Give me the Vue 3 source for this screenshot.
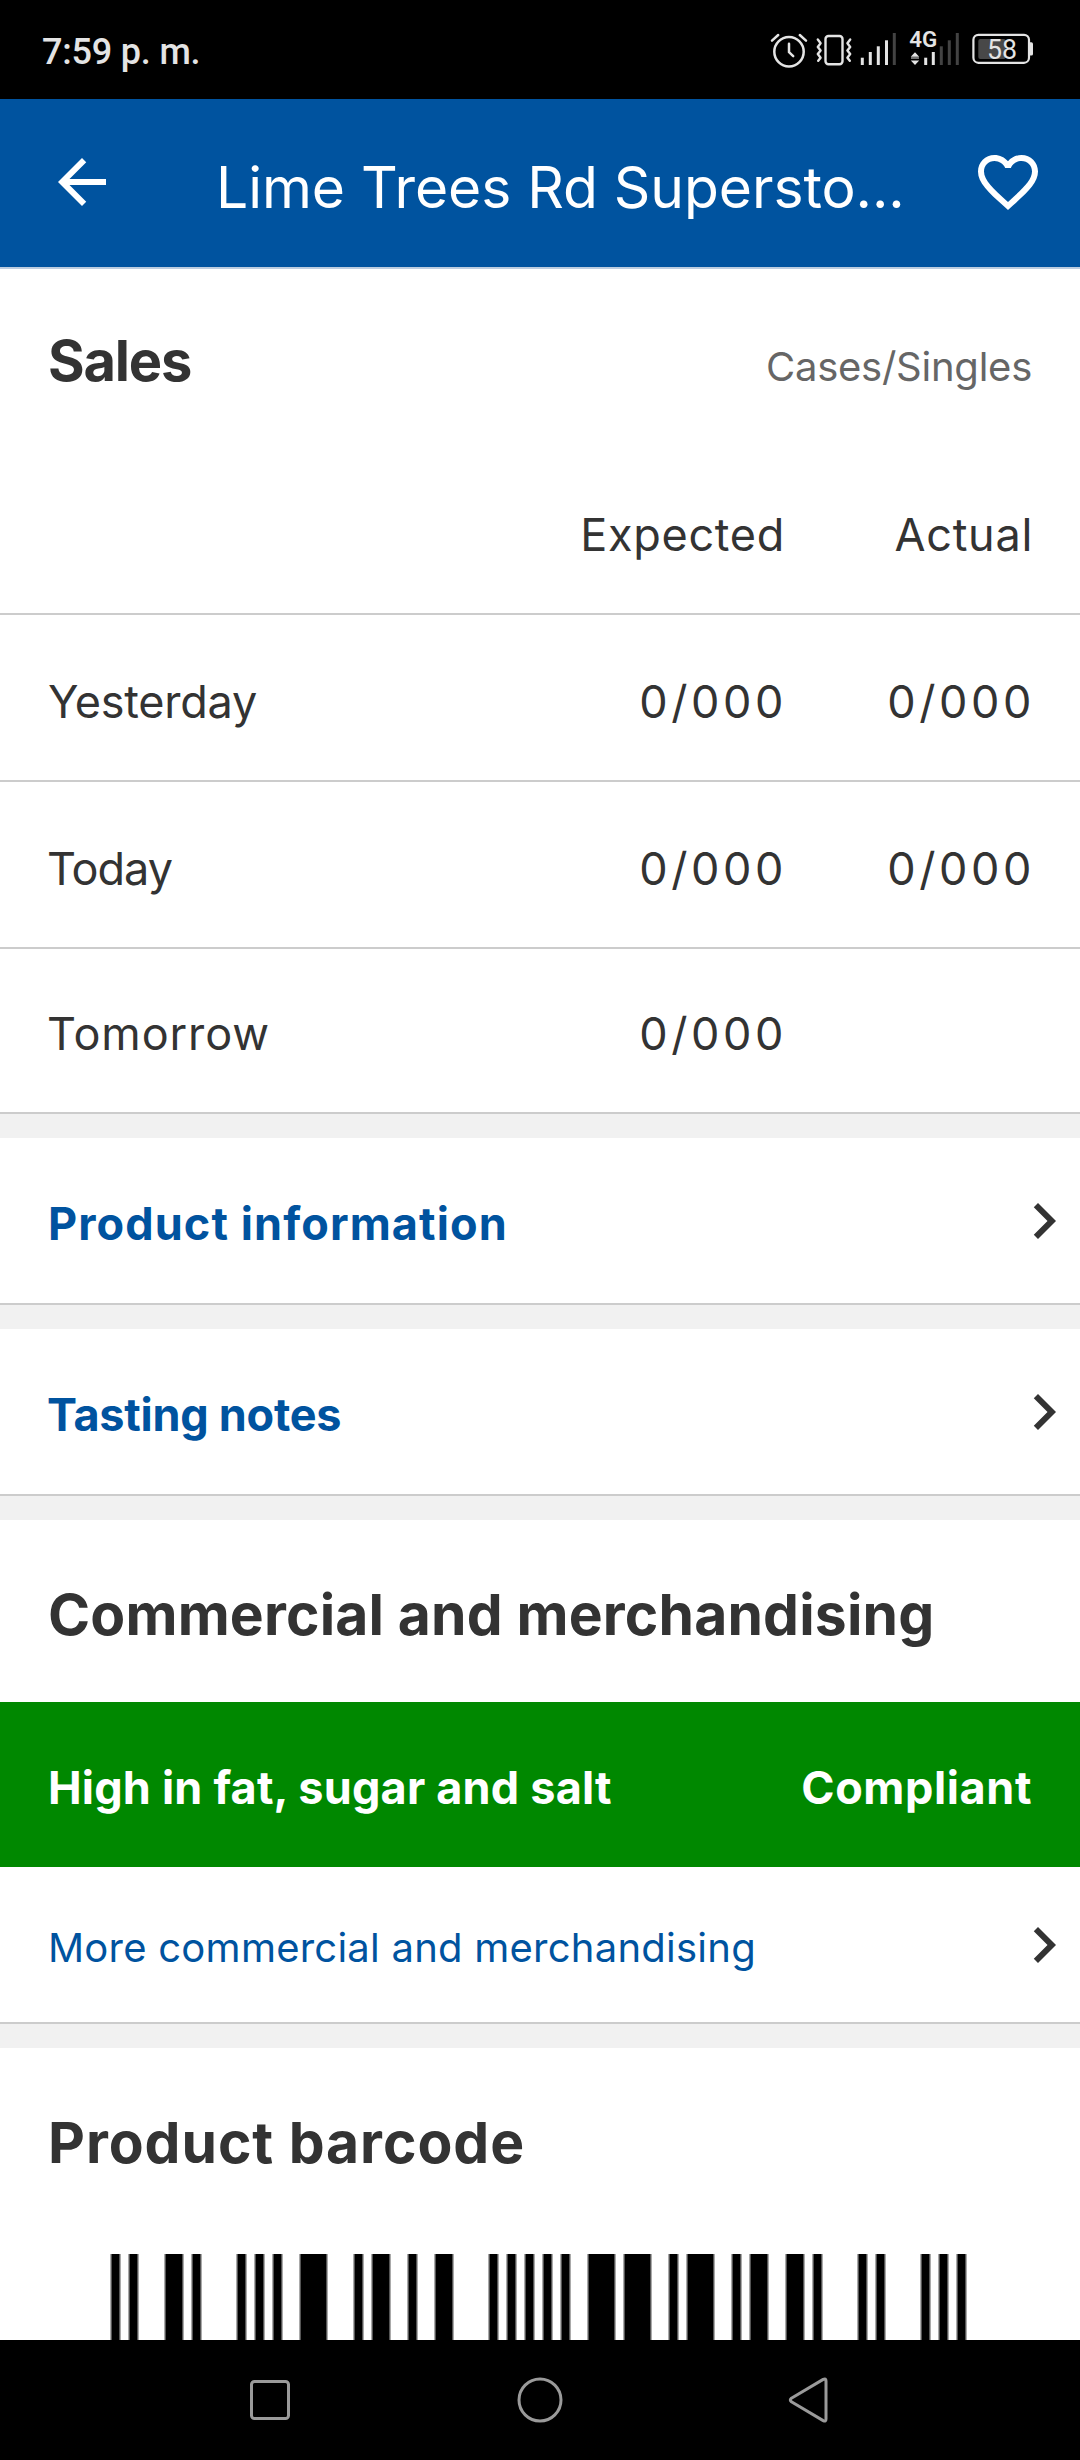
<script setup>
import { computed } from 'vue';

const sales = [
  { label: 'Yesterday', expected: '0/000', actual: '0/000' },
  { label: 'Today', expected: '0/000', actual: '0/000' },
  { label: 'Tomorrow', expected: '0/000', actual: '' }
];

const MODULE = 9;

// [start module, width in modules]
const bars = [
  [0, 1], [2, 1], [6, 2], [9, 1], [14, 1], [16, 1], [18, 1], [21, 3],
  [27, 1], [29, 2], [33, 1], [36, 2], [42, 1], [44, 1], [46, 1], [48, 1],
  [50, 1], [53, 3], [57, 3], [62, 1], [64, 3], [69, 1], [71, 2], [75, 2],
  [78, 1], [83, 1], [85, 1], [90, 1], [92, 1], [94, 1]
];

const barRects = computed(() => bars.map(([start, width]) => ({
  x: start * MODULE + 1,
  width: width * MODULE
})));

// Signal bars: x centre, top, dimmed
const signalOne = [[122.3, 57.7, false], [130.3, 52, false], [138.3, 46.3, false], [146.5, 40.3, false], [154.3, 33, true]];
const signalTwo = [[185.7, 57.7, false], [193.3, 52, false], [201.3, 46.3, true], [209.3, 40.3, true], [217.3, 33, true]];
</script>

<template>
  <div class="screen">
    <div class="status-bar">
      <span class="clock">7:59 p. m.</span>
      <svg class="status-icons" width="340" height="99" viewBox="0 0 340 99">
        <!-- Alarm -->
        <g fill="none" stroke="#e4e4e4" stroke-width="2.5" stroke-linecap="round" stroke-linejoin="round">
          <circle cx="49" cy="51.8" r="14.7" />
          <path d="M32 40.6l6.2-5.6M66 40.6l-6.2-5.6M49 43.8v8.4l4.2 4" />
        </g>
        <!-- Vibrate -->
        <g fill="none" stroke="#e4e4e4" stroke-width="2.4" stroke-linejoin="round" stroke-linecap="round">
          <rect x="85.5" y="36" width="17" height="28.2" rx="3" />
          <path d="M77.8 39.5l2.8 3.8-2.8 3.6 2.8 3.6-2.8 3.6 2.8 3.6-2.4 3" />
          <path d="M110.2 39.5l-2.8 3.8 2.8 3.6-2.8 3.6 2.8 3.6-2.8 3.6 2.4 3" />
        </g>
        <!-- Signal -->
        <g stroke-width="3" stroke-linecap="butt">
          <path
            v-for="[x, top, dim] in [...signalOne, ...signalTwo]"
            :key="x"
            :d="`M${x} ${top}V65`"
            :stroke="dim ? '#434343' : '#e4e4e4'"
          />
        </g>
        <text class="network" x="169.3" y="47.4" textLength="28" lengthAdjust="spacingAndGlyphs">4G</text>
        <path d="M175 52.2l4.2 4.6h-8.4zM175 65l4.2-4.6h-8.4zM171 57.5h8v1h-8z" fill="#e4e4e4" />
        <!-- Battery -->
        <rect x="238.3" y="39" width="27.4" height="20" rx="2" fill="#484848" />
        <rect x="233.4" y="34.8" width="55.6" height="28" rx="5" fill="none" stroke="#e4e4e4" stroke-width="2.2" />
        <path d="M290 42.3h1.4a1.6 1.6 0 0 1 1.6 1.6v10a1.6 1.6 0 0 1-1.6 1.6H290z" fill="#e4e4e4" />
        <text class="battery-level" x="247" y="59.3" textLength="30" lengthAdjust="spacingAndGlyphs">58</text>
      </svg>
    </div>

    <header class="app-bar">
      <svg class="bar-icon" viewBox="0 0 24 24" fill="#fff">
        <path d="M20 11H7.83l5.59-5.59L12 4l-8 8 8 8 1.41-1.41L7.83 13H20v-2z" />
      </svg>
      <h1 class="bar-title">Lime Trees Rd Supersto...</h1>
      <svg class="bar-icon" viewBox="0 0 24 24" fill="#fff">
        <path d="M16.5 3c-1.74 0-3.41.81-4.5 2.09C10.91 3.81 9.24 3 7.5 3 4.42 3 2 5.42 2 8.5c0 3.78 3.4 6.86 8.55 11.54L12 21.35l1.45-1.32C18.6 15.36 22 12.28 22 8.5 22 5.42 19.58 3 16.5 3zm-4.4 15.55l-.1.1-.1-.1C7.14 14.24 4 11.39 4 8.5 4 6.5 5.5 5 7.5 5c1.54 0 3.04.99 3.57 2.36h1.87C13.46 5.99 14.96 5 16.5 5c2 0 3.5 1.5 3.5 3.5 0 2.89-3.14 5.74-7.9 10.05z" />
      </svg>
    </header>

    <main class="content">
      <section class="card">
        <div class="sales-head">
          <h2 class="heading sales-title">Sales</h2>
          <span class="unit">Cases/Singles</span>
        </div>
        <div class="sales-row sales-columns">
          <span></span>
          <span>Expected</span>
          <span>Actual</span>
        </div>
        <div v-for="row in sales" :key="row.label" class="sales-row">
          <span :class="row.label.toLowerCase()">{{ row.label }}</span>
          <span class="number">{{ row.expected }}</span>
          <span class="number">{{ row.actual }}</span>
        </div>
      </section>

      <section class="card link-row">
        <span class="link-label product-link">Product information</span>
        <svg class="chevron" viewBox="0 0 24 24"><path d="M10 6L8.59 7.41 13.17 12l-4.58 4.59L10 18l6-6z" /></svg>
      </section>

      <section class="card link-row">
        <span class="link-label tasting-link">Tasting notes</span>
        <svg class="chevron" viewBox="0 0 24 24"><path d="M10 6L8.59 7.41 13.17 12l-4.58 4.59L10 18l6-6z" /></svg>
      </section>

      <section class="card">
        <h2 class="heading commercial-title">Commercial and merchandising</h2>
        <div class="compliance">
          <span class="hfss">High in fat, sugar and salt</span>
          <span class="compliant">Compliant</span>
        </div>
        <div class="link-row more-row">
          <span class="more-label">More commercial and merchandising</span>
          <svg class="chevron" viewBox="0 0 24 24"><path d="M10 6L8.59 7.41 13.17 12l-4.58 4.59L10 18l6-6z" /></svg>
        </div>
      </section>

      <section class="card barcode-card">
        <h2 class="heading barcode-title">Product barcode</h2>
        <svg class="barcode" width="857" height="86" viewBox="0 0 857 86" shape-rendering="crispEdges">
          <g v-for="bar in barRects" :key="bar.x">
            <rect :x="bar.x - 1" y="0" :width="bar.width + 2" height="86" fill="#aaa" />
            <rect :x="bar.x" y="0" :width="bar.width" height="86" fill="#555" />
            <rect :x="bar.x + 1" y="0" :width="bar.width - 2" height="86" fill="#000" />
          </g>
        </svg>
      </section>
    </main>

    <nav class="nav-bar">
      <svg class="nav-icon" viewBox="0 0 60 60"><rect x="11.5" y="11.5" width="37" height="37" rx="3" /></svg>
      <svg class="nav-icon" viewBox="0 0 60 60"><circle cx="30" cy="30" r="21" /></svg>
      <svg class="nav-icon" viewBox="0 0 60 60"><path d="M11.4 28.2L43.2 9.4Q46 8 46 11V49Q46 52 43.2 50.6L11.4 31.8Q9.2 30 11.4 28.2z" /></svg>
    </nav>
  </div>
</template>

<style>
body {
  margin: 0;
  background: #000;
}
</style>

<style scoped>
.screen {
  display: flex;
  flex-direction: column;
  width: 1080px;
  height: 2460px;
  overflow: hidden;
  background: #000;
  color: #333;
  font-family: Inter, sans-serif;
  font-size: 45px;
  line-height: 60px;
  white-space: nowrap;
}

.status-bar {
  display: flex;
  justify-content: space-between;
  height: 99px;
  padding-left: 42px;
  color: #e4e4e4;
  font-family: Roboto, sans-serif;
}

.clock {
  padding-top: 22px;
  font-size: 36px;
  font-weight: 500;
  letter-spacing: -0.2px;
}

.network {
  fill: #e4e4e4;
  font-size: 21.5px;
  font-weight: 600;
}

.battery-level {
  fill: #e4e4e4;
  font-size: 28px;
  font-weight: 400;
}

.app-bar {
  display: flex;
  align-items: flex-start;
  box-sizing: border-box;
  height: 170px;
  padding: 47px 36px 0 46px;
  background: #00539f;
  border-bottom: 2px solid #bccde0;
  color: #fff;
}

.bar-icon {
  flex: none;
  width: 72px;
  height: 72px;
}

.bar-title {
  flex: 1;
  margin: 12px 0 0 98px;
  font-size: 57px;
  font-weight: 400;
  letter-spacing: -0.06px;
}

.content {
  display: flex;
  flex-direction: column;
  gap: 24px;
  height: 2071px;
  overflow: hidden;
  background: #f1f1f1;
}

.card {
  flex: none;
  background: #fff;
}

.heading {
  margin: 0;
  font-size: 57px;
  font-weight: 700;
}

.sales-head {
  display: flex;
  justify-content: space-between;
  align-items: baseline;
  box-sizing: border-box;
  height: 180px;
  padding: 62px 48px 0 48px;
}

.sales-title {
  font-size: 56px;
  letter-spacing: -1.2px;
}

.unit {
  color: #666;
  font-size: 40px;
  letter-spacing: -0.25px;
}

.sales-row {
  display: grid;
  grid-template-columns: 1fr 300px 248px;
  box-sizing: border-box;
  height: 167px;
  padding: 57px 48px 0 48px;
  border-bottom: 2px solid #ccc;
}

.sales-row > span + span {
  text-align: right;
}

.sales-columns {
  height: 166px;
  padding-top: 56px;
  padding-right: 47px;
  letter-spacing: 0.7px;
}

.sales-row:last-child {
  height: 165px;
  padding-top: 55px;
}

.yesterday {
  letter-spacing: -0.25px;
}

.today {
  margin-left: -1px;
  letter-spacing: -1px;
}

.tomorrow {
  margin-left: -1px;
  letter-spacing: 0.9px;
}

/* The negative margin takes back the space after the last digit */
.number {
  margin-right: -3px;
  letter-spacing: 3.6px;
}

.link-row {
  display: flex;
  justify-content: space-between;
  box-sizing: border-box;
  height: 167px;
  padding: 47px 0 0 48px;
  border-bottom: 2px solid #ccc;
}

.link-label {
  padding-top: 9px;
  color: #00539f;
  font-weight: 700;
}

.product-link {
  letter-spacing: 1.1px;
}

.tasting-link {
  margin-left: -1px;
  letter-spacing: -0.25px;
}

.chevron {
  flex: none;
  width: 72px;
  height: 72px;
  fill: #333;
}

.commercial-title {
  height: 117px;
  padding: 65px 0 0 48px;
  letter-spacing: 0.17px;
}

.compliance {
  display: flex;
  justify-content: space-between;
  box-sizing: border-box;
  height: 165px;
  padding: 56px 48px 0;
  background: #008800;
  color: #fff;
  font-weight: 700;
}

.hfss {
  letter-spacing: 0.2px;
}

.compliant {
  letter-spacing: 0.6px;
}

.more-row {
  height: 157px;
  padding-top: 42px;
}

.more-label {
  padding-top: 9px;
  color: #00539f;
  font-size: 40px;
  letter-spacing: 0.24px;
}

.barcode-card {
  height: 292px;
}

.barcode-title {
  height: 141px;
  padding: 65px 0 0 48px;
  letter-spacing: 0.95px;
}

.barcode {
  display: block;
  margin-left: 110px;
}

.nav-bar {
  display: flex;
  justify-content: center;
  align-items: center;
  gap: 210px;
  height: 120px;
}

.nav-icon {
  width: 60px;
  height: 60px;
  fill: none;
  stroke: #9a9a9a;
  stroke-width: 3;
  stroke-linejoin: round;
}
</style>
